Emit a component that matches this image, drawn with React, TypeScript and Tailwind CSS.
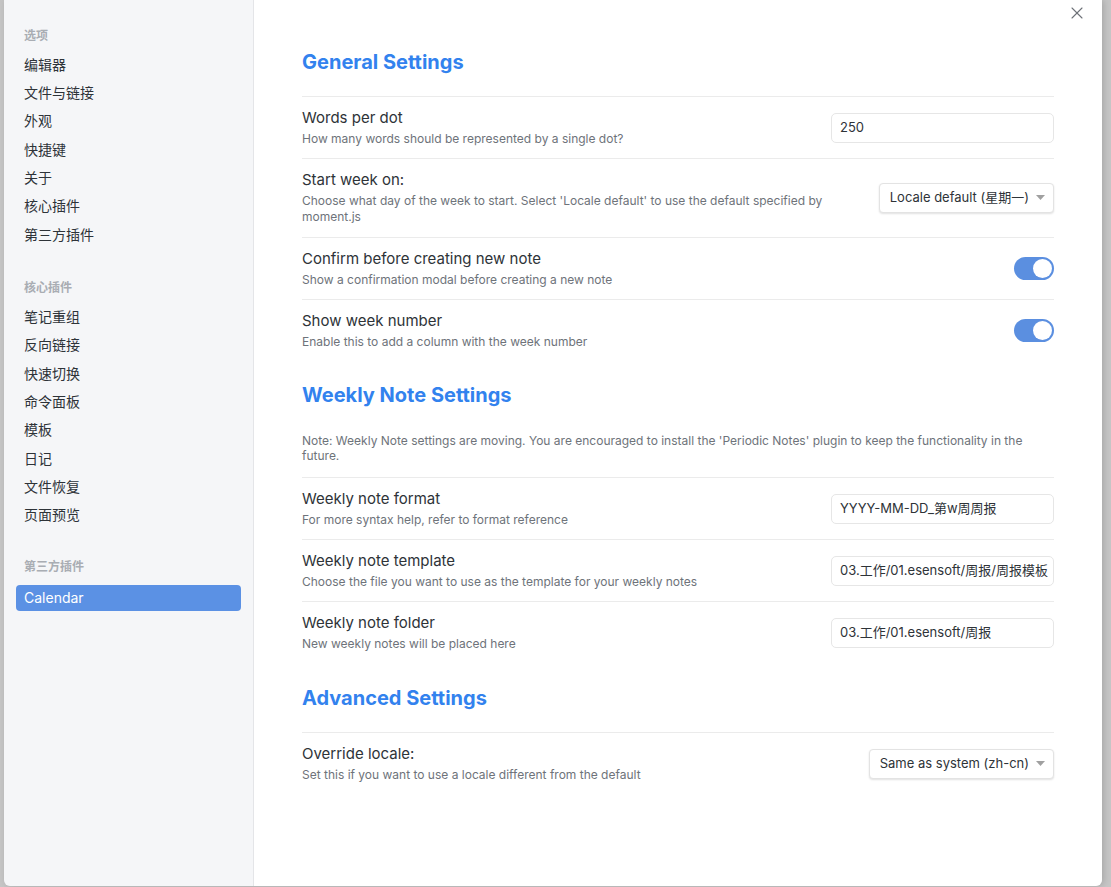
import { X } from 'lucide-react';

const font = { fontFamily: 'Inter, "Noto Sans CJK SC", sans-serif' };

function SideHeader({ children, className = '' }: { children: string; className?: string }) {
  return (
    <div className={`px-2 text-[12px] leading-[20px] font-semibold text-[#a9adb3] ${className}`}>{children}</div>
  );
}

function SideItem({ children, active = false }: { children: string; active?: boolean }) {
  if (active) {
    return (
      <div className="mt-[8px] h-[26px] flex items-center px-2 rounded-[4px] bg-[#5b91e4] text-white text-[14px]">
        {children}
      </div>
    );
  }
  return <div className="h-[28.33px] flex items-center px-2 text-[14px] text-[#2e3338]">{children}</div>;
}

function Toggle() {
  return (
    <div className="w-[40px] h-[23px] rounded-full bg-[#5b8fe0] flex items-center justify-end pr-[2px]">
      <div className="w-[19px] h-[19px] rounded-full bg-white" />
    </div>
  );
}

function TextInput({ value }: { value: string }) {
  return (
    <div className="w-[223px] h-[30px] rounded-[5px] border border-[#e6e6e6] bg-white px-[8px] flex items-center text-[13px] text-[#2e3338] overflow-hidden whitespace-nowrap">
      {value}
    </div>
  );
}

function Dropdown({ value }: { value: string }) {
  return (
    <div className="h-[30px] rounded-[4px] border border-[#e3e3e3] bg-white shadow-[0_1px_2px_rgba(0,0,0,0.12)] pl-[10px] pr-[8px] flex items-center gap-[7px] text-[13px] text-[#2e3338] whitespace-nowrap">
      <span>{value}</span>
      <svg width="9" height="5" viewBox="0 0 9 5">
        <path d="M0 0 L9 0 L4.5 5 Z" fill="#a0a0a0" />
      </svg>
    </div>
  );
}

function Row({
  name,
  desc,
  control,
  border = true,
  className = 'pt-[11.5px] pb-[11.5px]',
}: {
  name?: string;
  desc: React.ReactNode;
  control?: React.ReactNode;
  border?: boolean;
  className?: string;
}) {
  return (
    <div className={`flex items-center justify-between ${className} ${border ? 'border-t border-[#ebebeb]' : ''}`}>
      <div className="flex-1 pr-6">
        {name && <div className="text-[15px] leading-[18px] text-[#2e3338]">{name}</div>}
        <div className={`text-[12px] leading-[16px] text-[#6e737a] ${name ? 'mt-[4px]' : ''}`}>{desc}</div>
      </div>
      {control}
    </div>
  );
}

function Heading({ children, className = '' }: { children: string; className?: string }) {
  return <h3 className={`text-[20px] leading-[28px] font-bold text-[#3282ee] ${className}`}>{children}</h3>;
}

export default function App() {
  return (
    <div className="w-[1111px] h-[887px] bg-[#c5c5c5] pl-[4px] pr-[9px] overflow-hidden" style={font}>
      <div className="h-[886px] flex rounded-b-[6px] overflow-hidden shadow-[2px_0_6px_rgba(0,0,0,0.15)]">
        {/* Sidebar */}
        <aside className="w-[250px] shrink-0 bg-[#f5f6f8] border-r border-[#e4e5e8] px-3 pt-[26px]">
          <SideHeader className="mb-[4px]">选项</SideHeader>
          {['编辑器', '文件与链接', '外观', '快捷键', '关于', '核心插件', '第三方插件'].map((s) => (
            <SideItem key={s}>{s}</SideItem>
          ))}
          <SideHeader className="mt-[30px] mb-[4px]">核心插件</SideHeader>
          {['笔记重组', '反向链接', '快速切换', '命令面板', '模板', '日记', '文件恢复', '页面预览'].map((s) => (
            <SideItem key={s}>{s}</SideItem>
          ))}
          <SideHeader className="mt-[28px]">第三方插件</SideHeader>
          <SideItem active>Calendar</SideItem>
        </aside>

        {/* Content */}
        <main className="flex-1 bg-white relative px-12 pt-12">
          <button className="absolute right-[15px] top-[3px] text-[#6d7177]">
            <X size={20} strokeWidth={1.3} />
          </button>

          <Heading className="mb-5">General Settings</Heading>
          <Row name="Words per dot" desc="How many words should be represented by a single dot?" control={<TextInput value="250" />} />
          <Row
            name="Start week on:"
            className="pt-[11.5px] pb-[12.5px]"
            desc="Choose what day of the week to start. Select 'Locale default' to use the default specified by moment.js"
            control={<Dropdown value="Locale default (星期一)" />}
          />
          <Row name="Confirm before creating new note" desc="Show a confirmation modal before creating a new note" control={<Toggle />} />
          <Row name="Show week number" desc="Enable this to add a column with the week number" control={<Toggle />} />

          <Heading className="mt-5">Weekly Note Settings</Heading>
          <Row
            border={false}
            className="pt-[24px] pb-[14px]"
            desc={
              <span className="block leading-[15px]">
                Note: Weekly Note settings are moving. You are encouraged to install the 'Periodic Notes' plugin to keep the functionality in the future.
              </span>
            }
          />
          <Row name="Weekly note format" desc="For more syntax help, refer to format reference" control={<TextInput value="YYYY-MM-DD_第w周周报" />} />
          <Row
            name="Weekly note template"
            desc="Choose the file you want to use as the template for your weekly notes"
            control={<TextInput value="03.工作/01.esensoft/周报/周报模板" />}
          />
          <Row name="Weekly note folder" desc="New weekly notes will be placed here" control={<TextInput value="03.工作/01.esensoft/周报" />} />

          <Heading className="mt-[21px] mb-5">Advanced Settings</Heading>
          <Row
            name="Override locale:"
            desc="Set this if you want to use a locale different from the default"
            control={<Dropdown value="Same as system (zh-cn)" />}
          />
        </main>
      </div>
    </div>
  );
}
